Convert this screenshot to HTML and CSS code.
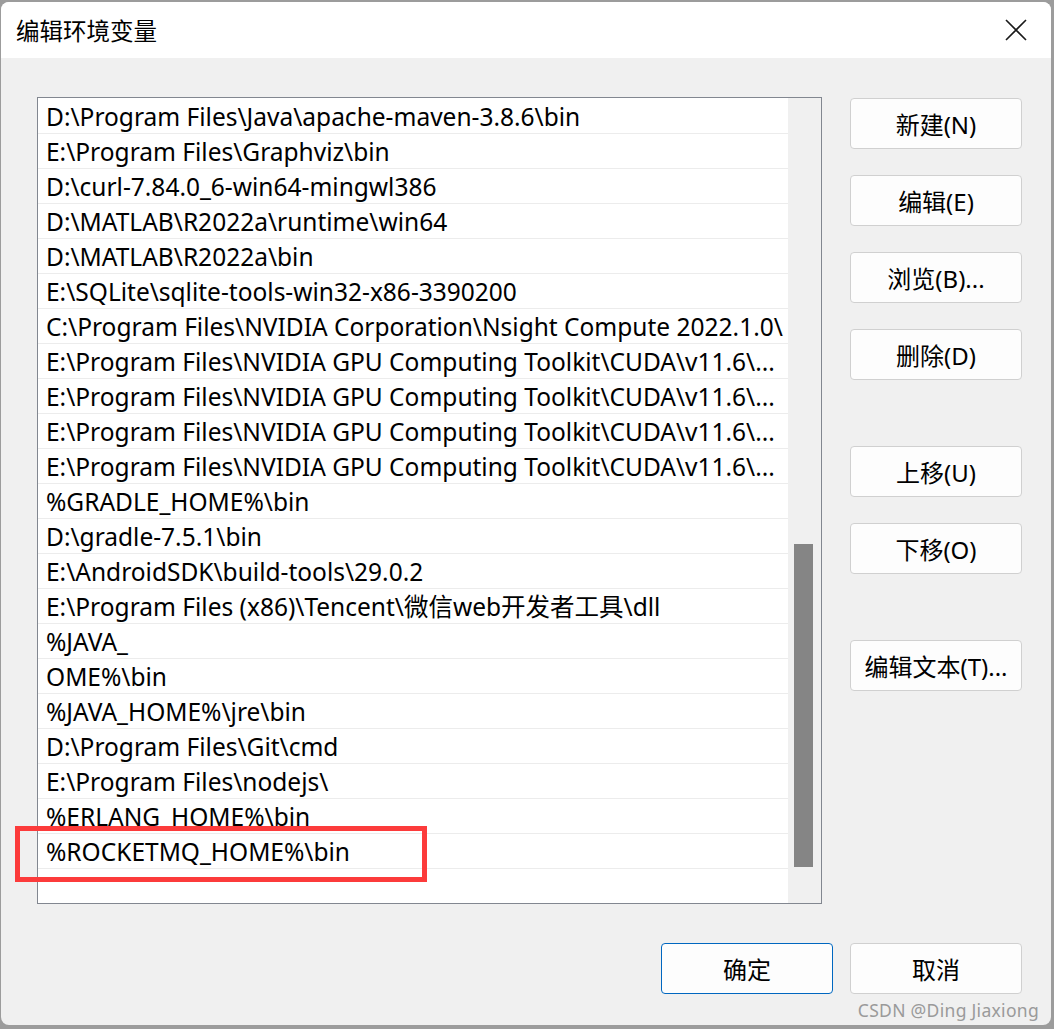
FILE: index.html
```html
<!DOCTYPE html>
<html lang="zh-CN">
<head>
<meta charset="utf-8">
<title>编辑环境变量</title>
<link rel="stylesheet" href="styles.css">
</head>
<body>
<div class="window">
  <div class="titlebar">
    <span class="title">编辑环境变量</span>
    <svg class="close" width="22" height="22" viewBox="0 0 22 22"><path d="M1 1 L21 21 M21 1 L1 21" stroke="#1a1a1a" stroke-width="1.6" fill="none"/></svg>
  </div>
  <div class="content">
    <div class="main">
      <div class="listbox">
        <div class="rows">
          <div class="row">D:\Program Files\Java\apache-maven-3.8.6\bin</div>
          <div class="row">E:\Program Files\Graphviz\bin</div>
          <div class="row">D:\curl-7.84.0_6-win64-mingwl386</div>
          <div class="row">D:\MATLAB\R2022a\runtime\win64</div>
          <div class="row">D:\MATLAB\R2022a\bin</div>
          <div class="row">E:\SQLite\sqlite-tools-win32-x86-3390200</div>
          <div class="row clip">C:\Program Files\NVIDIA Corporation\Nsight Compute 2022.1.0\</div>
          <div class="row">E:\Program Files\NVIDIA GPU Computing Toolkit\CUDA\v11.6\...</div>
          <div class="row">E:\Program Files\NVIDIA GPU Computing Toolkit\CUDA\v11.6\...</div>
          <div class="row">E:\Program Files\NVIDIA GPU Computing Toolkit\CUDA\v11.6\...</div>
          <div class="row">E:\Program Files\NVIDIA GPU Computing Toolkit\CUDA\v11.6\...</div>
          <div class="row">%GRADLE_HOME%\bin</div>
          <div class="row">D:\gradle-7.5.1\bin</div>
          <div class="row">E:\AndroidSDK\build-tools\29.0.2</div>
          <div class="row">E:\Program Files (x86)\Tencent\微信web开发者工具\dll</div>
          <div class="row">%JAVA_</div>
          <div class="row">OME%\bin</div>
          <div class="row">%JAVA_HOME%\jre\bin</div>
          <div class="row">D:\Program Files\Git\cmd</div>
          <div class="row">E:\Program Files\nodejs\</div>
          <div class="row">%ERLANG_HOME%\bin</div>
          <div class="row">%ROCKETMQ_HOME%\bin</div>
        </div>
        <div class="scrollbar"><div class="thumb"></div></div>
      </div>
      <div class="side">
        <div class="group">
          <button class="btn">新建(N)</button>
          <button class="btn">编辑(E)</button>
          <button class="btn">浏览(B)...</button>
          <button class="btn">删除(D)</button>
        </div>
        <div class="group">
          <button class="btn">上移(U)</button>
          <button class="btn">下移(O)</button>
        </div>
        <div class="group">
          <button class="btn">编辑文本(T)...</button>
        </div>
      </div>
    </div>
    <div class="footer">
      <button class="btn primary">确定</button>
      <button class="btn">取消</button>
    </div>
    <div class="watermark">CSDN @Ding Jiaxiong</div>
  </div>
  <div class="highlight"></div>
</div>
</body>
</html>
```

FILE: styles.css
```css
html, body {
  margin: 0;
  padding: 0;
}
body {
  background: #9c9c9c;
  width: 1054px;
  height: 1029px;
  overflow: hidden;
  font-family: "Noto Sans", "Noto Sans CJK SC", sans-serif;
  color: #000;
}
.window {
  position: relative;
  margin: 2px 0 0 1px;
  width: 1050px;
  height: 1023px;
  background: #f0f0f0;
  border-radius: 8px;
  overflow: hidden;
  display: flex;
  flex-direction: column;
}
.titlebar {
  height: 56px;
  background: #ffffff;
  display: flex;
  align-items: center;
  justify-content: space-between;
  padding: 0 24px 0 15px;
  flex: none;
}
.title {
  font-family: "Noto Sans CJK SC", sans-serif;
  font-size: 23.5px;
  color: #000;
}
.content {
  position: relative;
  flex: 1;
  padding: 39px 29px 0 36px;
  display: flex;
  flex-direction: column;
}
.main {
  display: flex;
  gap: 28px;
}
.listbox {
  width: 785px;
  height: 807px;
  box-sizing: border-box;
  border: 1px solid #828790;
  background: #ffffff;
  display: flex;
}
.rows {
  flex: 1;
  padding-top: 1px;
  overflow: hidden;
}
.row {
  height: 33px;
  padding-top: 1px;
  border-bottom: 1px solid #ececec;
  padding-left: 8px;
  font-size: 24.5px;
  line-height: 34px;
  white-space: nowrap;
  overflow: hidden;
  font-family: "Noto Sans", "Noto Sans CJK SC", sans-serif;
}
.scrollbar {
  width: 33px;
  background: #f0f0f0;
  position: relative;
  flex: none;
}
.thumb {
  position: absolute;
  left: 6px;
  top: 446px;
  width: 19px;
  height: 323px;
  background: #858585;
}
.side {
  display: flex;
  flex-direction: column;
  gap: 66px;
  padding-top: 1px;
}
.group {
  display: flex;
  flex-direction: column;
  gap: 26px;
}
.btn {
  width: 172px;
  height: 51px;
  box-sizing: border-box;
  border: 1px solid #d0d0d0;
  border-radius: 4px;
  background: #fdfdfd;
  font-family: "Noto Sans", "Noto Sans CJK SC", sans-serif;
  font-size: 24px;
  color: #000;
  padding: 0;
}
.footer {
  display: flex;
  justify-content: flex-end;
  gap: 17px;
  margin-top: 39px;
}
.primary {
  border: 1px solid #0067c0;
}
.watermark {
  position: absolute;
  right: 12px;
  bottom: 3px;
  font-family: "Noto Sans", sans-serif;
  font-size: 17.5px;
  color: #9a9a9a;
  letter-spacing: 0.3px;
}
.highlight {
  position: absolute;
  left: 14px;
  top: 824px;
  width: 402px;
  height: 46px;
  border: 5px solid #fc3b3b;
}
```
